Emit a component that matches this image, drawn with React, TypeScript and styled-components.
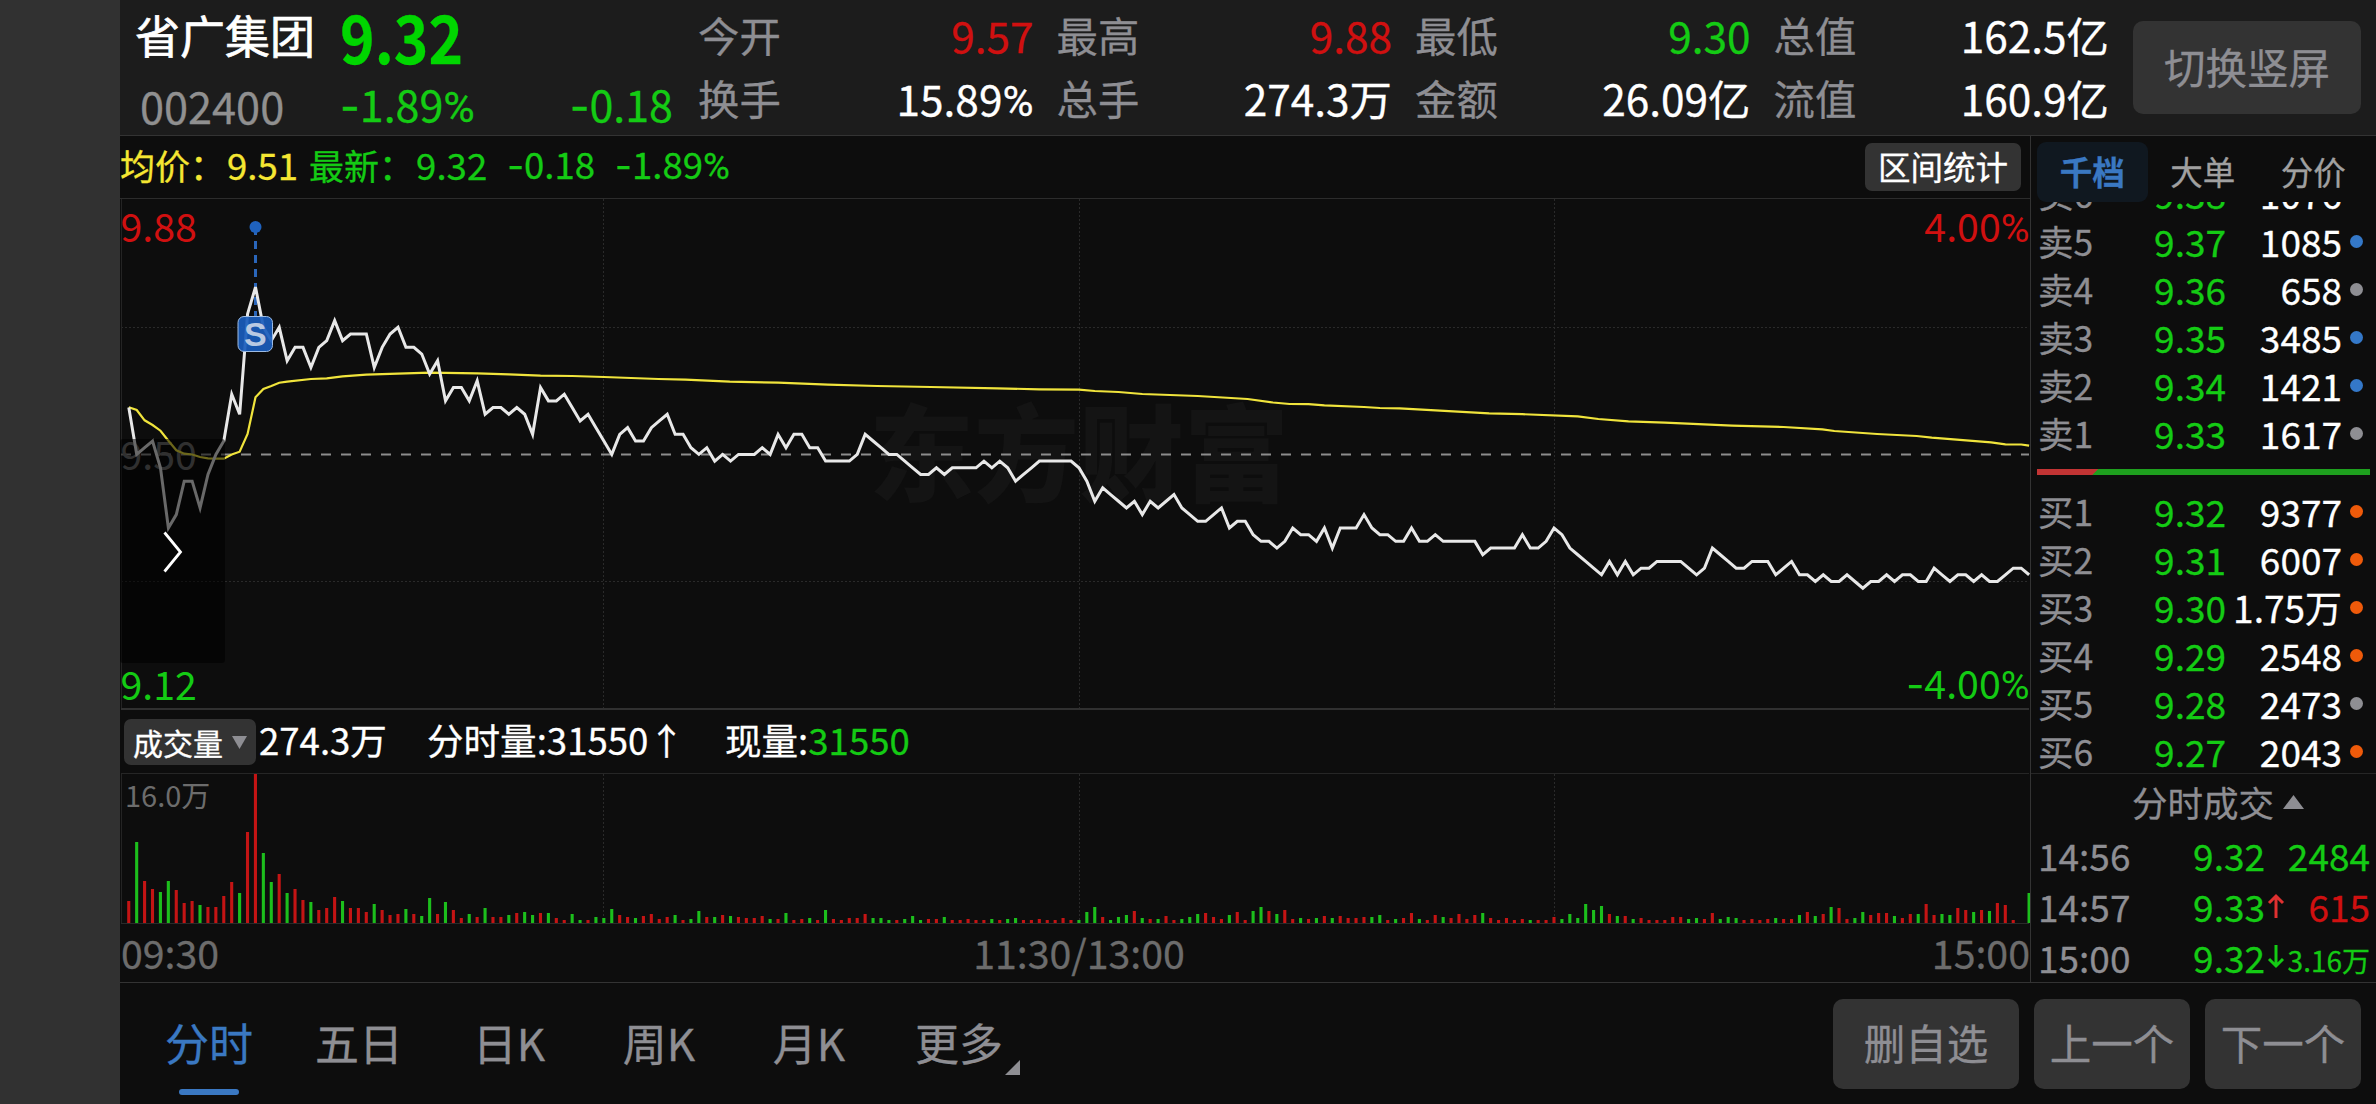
import React from "react";
import styled, { createGlobalStyle } from "styled-components";

const GREEN = "#14cb14";
const RED = "#d01010";
const BLUE = "#3a78c2";
const GRAY = "#8e8e93";

const GlobalStyle = createGlobalStyle`
  body {
    margin: 0;
    background: #0d0d0d;
    font-family: "Noto Sans CJK SC", "Noto Sans", sans-serif;
    color: #ffffff;
    -webkit-text-stroke: 0.3px;
  }
  * {
    box-sizing: border-box;
  }
`;

const Screen = styled.div`
  width: 2376px;
  height: 1104px;
  display: flex;
  overflow: hidden;
  background: #0d0d0d;
`;

const Notch = styled.div`
  width: 120px;
  flex: none;
  background: #313131;
`;

const Page = styled.div`
  flex: 1;
  display: flex;
  flex-direction: column;
  min-width: 0;
`;

/* ---------- figures ---------- */

// wider minus and narrower percent sign than the text font has
const Minus = styled.tspan`
  font-family: Inter, sans-serif;
`;

const Percent = styled.tspan`
  font-family: Roboto, sans-serif;
`;

const Figure: React.FC<{ value: string; svg?: boolean }> = ({ value, svg }) => {
  const tag = svg ? "tspan" : "span";
  return (
    <>
      {value.startsWith("-") && <Minus as={tag}>-</Minus>}
      {value.replace(/[-%]/g, "")}
      {value.endsWith("%") && <Percent as={tag}>%</Percent>}
    </>
  );
};

/* ---------- header ---------- */

const Header = styled.header`
  height: 136px;
  flex: none;
  display: flex;
  background: #1c1c1c;
  border-bottom: 1px solid #333333;
  white-space: nowrap;
`;

const NameBlock = styled.div`
  width: 220px;
  flex: none;
  padding-left: 15px;
`;

const StockName = styled.div`
  height: 70px;
  line-height: 70px;
  font-size: 45px;
  -webkit-text-stroke: 0.7px;
`;

const StockCode = styled.div`
  padding-left: 5px;
  line-height: 70px;
  font-size: 43.3px;
  color: #909090;
`;

const PriceBlock = styled.div`
  width: 333px;
  margin-right: 2px;
  flex: none;
  color: ${GREEN};
`;

const BigPrice = styled.div`
  height: 70px;
  line-height: 70px;
  font-size: 66px;
  font-weight: 700;
  transform: scaleX(0.89);
  transform-origin: left;
  color: #00d600;
`;

const ChangeRow = styled.div`
  display: flex;
  justify-content: space-between;
  line-height: 67px;
  font-size: 43px;
`;

const Quotes = styled.div`
  display: grid;
  grid-template-columns: repeat(4, 358.5px);
  grid-template-rows: 63px 63px;
  width: 1435px;
  flex: none;
  padding: 3px 0 0 23px;
`;

const QuoteCell = styled.div`
  display: flex;
  justify-content: space-between;
  padding-right: 23px;
  line-height: 63px;
`;

const QuoteLabel = styled.span`
  font-size: 41.4px;
  color: ${GRAY};
`;

const QuoteValue = styled.span<{ $color?: string }>`
  font-size: 42.4px;
  color: ${(props) => props.$color || "#ffffff"};
`;

const RotateButton = styled.button`
  width: 228px;
  height: 93px;
  margin: 21px 0 0 23px;
  padding: 0 0 3px;
  flex: none;
  border: none;
  border-radius: 10px;
  background: #333333;
  color: ${GRAY};
  font-family: inherit;
  font-size: 41.5px;
`;

/* ---------- body ---------- */

const Body = styled.main`
  height: 847px;
  flex: none;
  display: flex;
  border-bottom: 1px solid #333333;
`;

const ChartColumn = styled.section`
  width: 1911px;
  flex: none;
  border-right: 1px solid #333333;
`;

const Legend = styled.div`
  height: 63px;
  display: flex;
  align-items: center;
  border-bottom: 1px solid #2c2c2c;
  line-height: 56px;
  white-space: pre;
  padding-right: 9px;
`;

const LegendItem = styled.span<{ $color: string; $left?: number; $size?: number }>`
  margin-left: ${(props) => props.$left || 0}px;
  margin-top: -4px;
  font-size: ${(props) => props.$size || 36.6}px;
  color: ${(props) => props.$color};
`;

const RangeButton = styled.button`
  width: 156px;
  height: 48px;
  margin: -1px 0 0 auto;
  padding: 0 0 2px;
  border: none;
  border-radius: 7px;
  background: #333333;
  color: #ffffff;
  font-family: inherit;
  font-size: 32.5px;
  line-height: 44px;
`;

const Svg = styled.svg`
  display: block;
`;

const VolumeBar = styled.div`
  height: 62px;
  display: flex;
  align-items: center;
  padding-left: 4px;
  font-size: 36.6px;
  line-height: 56px;
  white-space: pre;
`;

const VolumeSelect = styled.div`
  width: 132px;
  height: 46px;
  display: flex;
  align-items: center;
  justify-content: space-between;
  padding: 0 9px;
  margin-right: 3px;
  border-radius: 7px;
  background: #333333;
  font-size: 30px;
  line-height: 42px;
`;

const VolumeText = styled.span<{ $left?: number; $color?: string }>`
  margin-left: ${(props) => props.$left || 0}px;
  margin-top: -4px;
  color: ${(props) => props.$color || "#ffffff"};
`;

const TimeAxis = styled.div`
  height: 58px;
  display: grid;
  grid-template-columns: 1fr auto 1fr;
  padding-left: 8px;
  line-height: 53px;
  font-size: 39.3px;
  color: #6c6c6c;
  span:first-child {
    margin-left: -7px;
  }
  span:last-child {
    text-align: right;
  }
`;

/* ---------- order book ---------- */

const BookColumn = styled.aside`
  flex: 1;
  min-width: 0;
  display: flex;
  flex-direction: column;
`;

const BookTabs = styled.div`
  height: 66px;
  flex: none;
  display: flex;
  padding: 6px 0 0 6px;
`;

const BookTab = styled.div<{ $active?: boolean }>`
  width: 110.5px;
  height: 60px;
  border-radius: 9px;
  text-align: center;
  font-size: 32.5px;
  line-height: 58px;
  font-weight: ${(props) => (props.$active ? 700 : 400)};
  color: ${(props) => (props.$active ? BLUE : "#a0a0a0")};
  background: ${(props) => (props.$active ? "#101820" : "transparent")};
`;

const BookList = styled.div`
  height: 572px;
  flex: none;
  overflow: hidden;
  border-bottom: 1px solid #262626;
`;

const SellSide = styled.div`
  height: 257px;
  display: flex;
  flex-direction: column;
  justify-content: flex-end;
  overflow: hidden;
`;

const BookRow = styled.div`
  height: 48px;
  flex: none;
  display: flex;
  padding: 0 13px 0 7px;
  font-size: 37px;
  line-height: 44px;
`;

const Level = styled.span`
  width: 91px;
  font-size: 35.5px;
  color: ${GRAY};
`;

const BookPrice = styled.span`
  width: 97px;
  text-align: right;
  color: ${GREEN};
`;

const BookVolume = styled.span`
  flex: 1;
  text-align: right;
  margin-right: 8px;
  white-space: nowrap;
`;

const Dot = styled.i<{ $color: string }>`
  width: 13px;
  height: 13px;
  margin-top: 16px;
  border-radius: 50%;
  background: ${(props) => props.$color};
`;

const RatioBar = styled.div`
  height: 6px;
  margin: 10px 6px 14px;
  background: linear-gradient(135deg, #c23434 43px, #1ea01e 43.5px);
`;

const TradesTitle = styled.div`
  height: 56px;
  flex: none;
  display: flex;
  align-items: center;
  justify-content: center;
  gap: 9px;
  padding-left: 31px;
  padding-right: 2px;
  font-size: 35.5px;
  line-height: 54px;
  color: ${GRAY};
`;

const TradesWrap = styled.div`
  padding: 0 6px 0 7px;
`;

const TradeRow = styled.div`
  height: 51px;
  display: flex;
  align-items: center;
  font-size: 37px;
  line-height: 51px;
`;

const TradeTime = styled.span`
  width: 144px;
  color: ${GRAY};
`;

const TradePrice = styled.span`
  width: 83px;
  text-align: right;
  color: ${GREEN};
`;

const TradeArrow = styled.svg`
  width: 18px;
  height: 26px;
  margin: -2px 0 0 2px;
  overflow: visible;
  fill: none;
  stroke-width: 3;
`;

const TradeVolume = styled.span<{ $color: string; $small?: boolean }>`
  flex: 1;
  text-align: right;
  font-size: ${(props) => (props.$small ? 28 : 37)}px;
  padding-top: ${(props) => (props.$small ? 6 : 0)}px;
  color: ${(props) => props.$color};
`;

/* ---------- footer ---------- */

const Footer = styled.footer`
  flex: 1;
  display: flex;
  justify-content: space-between;
  padding: 0 15px 0 14px;
`;

const PeriodTabs = styled.nav`
  display: flex;
`;

const PeriodTab = styled.div<{ $active?: boolean }>`
  width: 150px;
  height: 112px;
  display: flex;
  justify-content: center;
  font-size: 44px;
  line-height: 119px;
  color: ${(props) => (props.$active ? BLUE : GRAY)};
  position: relative;

  &::after {
    content: "";
    display: ${(props) => (props.$active ? "block" : "none")};
    position: absolute;
    bottom: 0;
    left: 45px;
    width: 60px;
    height: 6px;
    border-radius: 3px;
    background: ${BLUE};
  }
`;

const MoreMark = styled.svg`
  position: absolute;
  left: 121px;
  top: 77px;
`;

const Actions = styled.div`
  display: flex;
  gap: 15px;
  padding-top: 16px;
`;

const ActionButton = styled.button<{ $wide?: boolean }>`
  width: ${(props) => (props.$wide ? 186 : 156)}px;
  height: 90px;
  padding: 0 0 4px;
  border: none;
  border-radius: 10px;
  background: #333333;
  color: ${GRAY};
  font-family: inherit;
  font-size: 41.5px;
`;

/* ---------- data ---------- */

// price of every minute in cents, 09:30 to 15:00
const prices = [
  957, 950, 951, 952, 948, 939, 941, 946, 946, 942, 947, 950, 952, 959, 956, 971, 975, 969, 967, 969,
  964, 966, 966, 963, 966, 967, 970, 967, 968, 968, 968, 963, 966, 968, 969, 966, 966, 965, 962, 964,
  958, 960, 960, 958, 961, 956, 957, 957, 956, 957, 956, 953, 960, 958, 958, 959, 957, 955, 956, 954,
  952, 950, 953, 954, 952, 952, 954, 955, 956, 953, 953, 951, 950, 951, 949, 950, 949, 950, 950, 950,
  951, 950, 953, 951, 953, 953, 951, 951, 949, 949, 949, 949, 950, 953, 952, 951, 950, 950, 949, 948,
  947, 947, 948, 947, 948, 948, 948, 948, 949, 948, 949, 948, 946, 947, 948, 949, 949, 949, 949, 949,
  948, 946, 943, 945, 944, 943, 942, 943, 941, 943, 942, 943, 944, 942, 941, 940, 940, 941, 942, 939,
  940, 940, 938, 937, 937, 936, 937, 939, 938, 938, 937, 939, 936, 939, 939, 939, 941, 939, 938, 938,
  937, 937, 939, 937, 937, 938, 937, 937, 937, 937, 937, 935, 936, 936, 936, 936, 938, 936, 936, 937,
  939, 938, 936, 935, 934, 933, 932, 934, 932, 934, 932, 933, 933, 934, 934, 934, 934, 933, 932, 933,
  936, 935, 934, 933, 933, 934, 934, 934, 932, 933, 934, 932, 932, 931, 932, 931, 931, 932, 931, 930,
  931, 931, 932, 931, 932, 932, 931, 931, 933, 932, 931, 932, 932, 931, 932, 931, 931, 932, 933, 933,
  932,
];

// average price line: [minute, y]
const average: [number, number][] = [
  [0, 407.3], [1, 410], [2, 420.3], [3, 425], [4, 430.7], [5, 440.7], [6, 450.3], [7, 453.7],
  [8, 454.5], [9, 457], [10, 458.3], [11, 458.7], [12, 458.7], [13, 454.5], [14, 451.7], [15, 434],
  [16, 397.3], [17, 389], [18, 386], [19, 382.7], [20, 381.7], [23, 379], [25, 378.3], [27, 376.3],
  [30, 374.7], [34, 373.7], [38, 372.7], [44, 373.3], [48, 374.3], [52, 375.7], [56, 376], [60, 377],
  [66.9, 379], [70.3, 379.7], [75.9, 381.7], [82, 382.7], [88.3, 384.7], [94.5, 386], [101.3, 387],
  [109.7, 388.3], [115, 389.3], [120, 389.7], [122, 391], [125, 392], [128, 394], [135, 396],
  [141.3, 399], [144.5, 402.5], [146.6, 404], [149, 404.2], [151, 405.3], [156, 407], [158, 408],
  [160.5, 408.3], [171.8, 413.3], [176, 414.2], [183, 416.3], [185.6, 419], [189.4, 421.3],
  [194, 422.7], [202.5, 425.7], [209, 427], [213.9, 429.3], [215.4, 431], [220.8, 434],
  [225.8, 436], [227.7, 437.7], [235.2, 442.3], [237, 444.3], [239, 444.5], [240, 445.7],
];

// volume bar heights, negative values are falling minutes
const volumes = [
  22, -81, 42, 34, -31, -42, 33, 20, 22, -18, 16, 16, 27, 41, -30, 91, 149, -70, -41, 49,
  -30, 34, 23, -21, 13, 15, 26, -22, 15, 15, 11, -19, 13, 8, 9, -14, 9, -7, -25, 9,
  -21, 13, 5, -9, 6, -15, 6, 6, -8, 10, -11, -8, 10, -10, 5, 3, -9, -3, 3, -6,
  -5, -14, 8, 6, -5, 7, 9, 4, 6, -8, 3, -4, -12, 6, -6, 8, -7, 6, 5, 5,
  7, -4, 4, -10, 3, 4, -5, 3, -13, 4, 3, 5, 5, 9, -5, -5, -3, 3, -4, -7,
  -3, 4, 4, -6, 3, 3, 4, 3, 3, -4, 3, -4, -5, 3, 3, 4, 3, 3, 5, 3,
  -3, -11, -16, 6, -3, -6, -8, 12, -5, 4, -4, 7, 3, -4, -6, -9, 10, 6, 4, -8,
  11, 3, -12, -16, 12, -9, 13, 4, -5, 4, -5, 7, -5, 7, 5, 5, 6, -6, -8, 3,
  -4, 5, 10, -4, 3, 8, -6, 5, 9, 4, 8, -10, 5, 3, 5, 3, 4, -3, 3, 3,
  6, -4, -9, -5, -19, -13, -17, 9, -7, 7, -4, 5, 3, 3, 3, 6, 6, -4, -5, 4,
  10, -4, -6, -5, 3, 4, 3, 4, -5, 4, 4, -8, 11, -7, 9, -16, 15, 4, -5, -11,
  8, 10, 10, -7, 5, 9, -9, 19, 8, -9, -8, 15, 13, -11, 13, -12, 20, 18, 3, 0,
  -30,
];

interface Quote {
  label: string;
  value: string;
  color?: string;
}

const quotes: Quote[] = [
  { label: "今开", value: "9.57", color: RED },
  { label: "最高", value: "9.88", color: RED },
  { label: "最低", value: "9.30", color: GREEN },
  { label: "总值", value: "162.5亿" },
  { label: "换手", value: "15.89%" },
  { label: "总手", value: "274.3万" },
  { label: "金额", value: "26.09亿" },
  { label: "流值", value: "160.9亿" },
];

const DOT_BLUE = "#3478c8";
const DOT_GRAY = "#8e8e93";
const DOT_ORANGE = "#ee5a0a";

type Order = [string, string, string, string];

const sells: Order[] = [
  ["卖6", "9.38", "1076", "transparent"],
  ["卖5", "9.37", "1085", DOT_BLUE],
  ["卖4", "9.36", "658", DOT_GRAY],
  ["卖3", "9.35", "3485", DOT_BLUE],
  ["卖2", "9.34", "1421", DOT_BLUE],
  ["卖1", "9.33", "1617", DOT_GRAY],
];

const buys: Order[] = [
  ["买1", "9.32", "9377", DOT_ORANGE],
  ["买2", "9.31", "6007", DOT_ORANGE],
  ["买3", "9.30", "1.75万", DOT_ORANGE],
  ["买4", "9.29", "2548", DOT_ORANGE],
  ["买5", "9.28", "2473", DOT_GRAY],
  ["买6", "9.27", "2043", DOT_ORANGE],
];

const minuteX = (i: number) => 128.8 + i * 7.918;
const priceY = (cents: number) => 454.4 - (cents - 950) * 6.69;

const gridX = [603.5, 1079.5, 1554.5];

const PriceChart: React.FC = () => (
  <Svg width="1910" height="512" viewBox="120 199 1910 512">
    <text
      x="1079"
      y="493"
      textAnchor="middle"
      fontSize="105"
      fontWeight="900"
      fill="#141414"
      stroke="none"
    >
      东方财富
    </text>
    <g stroke="#2a2a2a" strokeDasharray="2 2">
      <path d="M121 327.5H2029M121 581.5H2029" />
      {gridX.map((x) => (
        <path key={x} d={`M${x} 199V708`} />
      ))}
    </g>
    <path d="M121.5 199V708" stroke="#242424" />
    <path d="M121 709H2029" stroke="#303030" strokeWidth="2" />
    <path
      d="M121 454.5H2029"
      stroke="#8c8c8c"
      strokeWidth="2"
      strokeDasharray="10 10"
    />
    <g fontSize="39.3">
      <text x="120.5" y="242" fill={RED}>9.88</text>
      <text x="120.5" y="469.5" fill="#6c6c6c">9.50</text>
      <text x="120.5" y="699.5" fill={GREEN}>9.12</text>
      <text x="2029.5" y="242" fill={RED} textAnchor="end">
        <Figure svg value="4.00%" />
      </text>
      <text x="2029.5" y="698.5" fill={GREEN} textAnchor="end">
        <Figure svg value="-4.00%" />
      </text>
    </g>
    <polyline
      points={average.map(([i, y]) => `${minuteX(i)},${y}`).join(" ")}
      fill="none"
      stroke="#f0e43c"
      strokeWidth="2.2"
    />
    <path
      d="M255.5 227V317"
      stroke="#2a66ba"
      strokeWidth="3"
      strokeDasharray="8 6"
    />
    <polyline
      points={prices.map((p, i) => `${minuteX(i)},${priceY(p)}`).join(" ")}
      fill="none"
      stroke="#e8e8e8"
      strokeWidth="3"
    />
    <circle cx="255.5" cy="227" r="6" fill="#1f62be" />
    <rect
      x="238"
      y="316.5"
      width="34.5"
      height="35"
      rx="6"
      fill="#1a5dbb"
      fillOpacity="0.93"
      stroke="#9dbbe2"
    />
    <text
      x="255.3"
      y="346"
      textAnchor="middle"
      fontSize="34"
      fontWeight="700"
      fontFamily="Liberation Sans, sans-serif"
      fill="#b9c9e2"
    >
      S
    </text>
    <rect x="120" y="439" width="105" height="224" rx="3" fill="#000000" fillOpacity="0.55" />
    <path d="M164.5 532.5L180.5 552L164.5 571.5" fill="none" stroke="#ffffff" strokeWidth="2.8" />
  </Svg>
);

const VolumeChart: React.FC = () => (
  <Svg width="1910" height="152" viewBox="120 772 1910 152">
    <path d="M121 772.5H2029" stroke="#262626" />
    <path d="M121.5 773V922" stroke="#242424" />
    <g stroke="#2a2a2a" strokeDasharray="2 2">
      {gridX.map((x) => (
        <path key={x} d={`M${x} 773V922`} />
      ))}
    </g>
    <path d="M121 922.5H2029" stroke="#2a2a2a" />
    <text x="125" y="805.5" fontSize="29" fill="#6c6c6c">16.0万</text>
    {volumes.map((v, i) => (
      <rect
        key={i}
        x={minuteX(i) - 1.6}
        y={922 - Math.abs(v)}
        width="3.1"
        height={Math.abs(v)}
        fill={v > 0 ? "#c41414" : "#1cbe1c"}
      />
    ))}
  </Svg>
);

const OrderRow: React.FC<{ order: Order }> = ({ order }) => (
  <BookRow>
    <Level>{order[0]}</Level>
    <BookPrice>{order[1]}</BookPrice>
    <BookVolume>{order[2]}</BookVolume>
    <Dot $color={order[3]} />
  </BookRow>
);

const App: React.FC = () => {
  return (
    <>
      <GlobalStyle />
      <Screen>
        <Notch />
        <Page>
          <Header>
            <NameBlock>
              <StockName>省广集团</StockName>
              <StockCode>002400</StockCode>
            </NameBlock>
            <PriceBlock>
              <BigPrice>9.32</BigPrice>
              <ChangeRow>
                <span>
                  <Figure value="-1.89%" />
                </span>
                <span>
                  <Figure value="-0.18" />
                </span>
              </ChangeRow>
            </PriceBlock>
            <Quotes>
              {quotes.map((q) => (
                <QuoteCell key={q.label}>
                  <QuoteLabel>{q.label}</QuoteLabel>
                  <QuoteValue $color={q.color}>
                    <Figure value={q.value} />
                  </QuoteValue>
                </QuoteCell>
              ))}
            </Quotes>
            <RotateButton>切换竖屏</RotateButton>
          </Header>

          <Body>
            <ChartColumn>
              <Legend>
                <LegendItem $color="#f5e632" $size={35}>均价：</LegendItem>
                <LegendItem $color="#f5e632" $left={2}>9.51</LegendItem>
                <LegendItem $color={GREEN} $left={11} $size={35}>最新：</LegendItem>
                <LegendItem $color={GREEN} $left={2}>9.32</LegendItem>
                <LegendItem $color={GREEN} $left={20}>
                  <Figure value="-0.18" />
                </LegendItem>
                <LegendItem $color={GREEN} $left={20}>
                  <Figure value="-1.89%" />
                </LegendItem>
                <RangeButton>区间统计</RangeButton>
              </Legend>
              <PriceChart />
              <VolumeBar>
                <VolumeSelect>
                  成交量
                  <svg width="15" height="13">
                    <path d="M0 0H15L7.5 13Z" fill={GRAY} />
                  </svg>
                </VolumeSelect>
                <VolumeText>274.3万</VolumeText>
                <VolumeText $left={40}>分时量:31550↑</VolumeText>
                <VolumeText $left={40}>现量:</VolumeText>
                <VolumeText $color={GREEN}>31550</VolumeText>
              </VolumeBar>
              <VolumeChart />
              <TimeAxis>
                <span>09:30</span>
                <span>11:30/13:00</span>
                <span>15:00</span>
              </TimeAxis>
            </ChartColumn>

            <BookColumn>
              <BookTabs>
                <BookTab $active>千档</BookTab>
                <BookTab>大单</BookTab>
                <BookTab>分价</BookTab>
              </BookTabs>
              <BookList>
                <SellSide>
                  {sells.map((o) => (
                    <OrderRow key={o[0]} order={o} />
                  ))}
                </SellSide>
                <RatioBar />
                {buys.map((o) => (
                  <OrderRow key={o[0]} order={o} />
                ))}
              </BookList>
              <TradesTitle>
                分时成交
                <svg width="21" height="14">
                  <path d="M10.5 0L21 14H0Z" fill={GRAY} />
                </svg>
              </TradesTitle>
              <TradesWrap>
                <TradeRow>
                  <TradeTime>14:56</TradeTime>
                  <TradePrice>9.32</TradePrice>
                  <TradeVolume $color={GREEN}>2484</TradeVolume>
                </TradeRow>
                <TradeRow>
                  <TradeTime>14:57</TradeTime>
                  <TradePrice>9.33</TradePrice>
                  <TradeArrow stroke="#e03030">
                    <path d="M9 25V3M2 10L9 3L16 10" />
                  </TradeArrow>
                  <TradeVolume $color={RED}>615</TradeVolume>
                </TradeRow>
                <TradeRow>
                  <TradeTime>15:00</TradeTime>
                  <TradePrice>9.32</TradePrice>
                  <TradeArrow stroke={GREEN}>
                    <path d="M9 1V22M2 15L9 22L16 15" />
                  </TradeArrow>
                  <TradeVolume $color={GREEN} $small>3.16万</TradeVolume>
                </TradeRow>
              </TradesWrap>
            </BookColumn>
          </Body>

          <Footer>
            <PeriodTabs>
              <PeriodTab $active>分时</PeriodTab>
              <PeriodTab>五日</PeriodTab>
              <PeriodTab>日K</PeriodTab>
              <PeriodTab>周K</PeriodTab>
              <PeriodTab>月K</PeriodTab>
              <PeriodTab>
                更多
                <MoreMark width="15" height="15">
                  <path d="M15 0V15H0Z" fill={GRAY} />
                </MoreMark>
              </PeriodTab>
            </PeriodTabs>
            <Actions>
              <ActionButton $wide>删自选</ActionButton>
              <ActionButton>上一个</ActionButton>
              <ActionButton>下一个</ActionButton>
            </Actions>
          </Footer>
        </Page>
      </Screen>
    </>
  );
};

export default App;
